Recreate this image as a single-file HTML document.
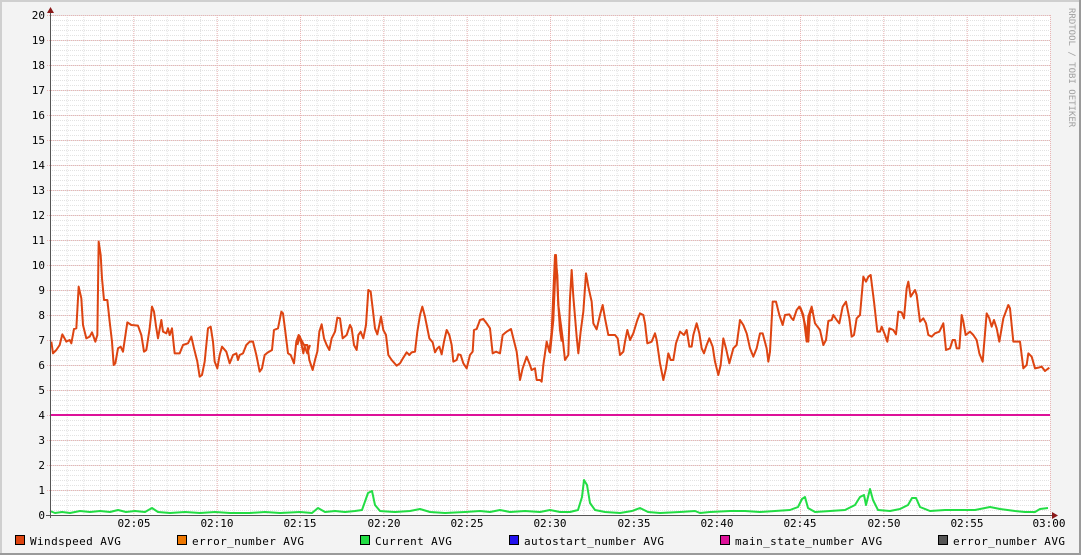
<!DOCTYPE html>
<html><head><meta charset="utf-8"><style>
html,body{margin:0;padding:0;background:#f3f3f3;}
svg{display:block;}
text{font-family:"DejaVu Sans Mono","Liberation Mono",monospace;}
</style></head><body>
<svg width="1081" height="555" viewBox="0 0 1081 555" xmlns="http://www.w3.org/2000/svg">
<defs>
<pattern id="mh" width="1000" height="5" patternUnits="userSpaceOnUse" x="50" y="15"><line x1="0" y1="0.5" x2="1000" y2="0.5" stroke="#e2e2e2" stroke-dasharray="1,1"/></pattern>
<pattern id="mv" width="16.667" height="500" patternUnits="userSpaceOnUse" x="50" y="15"><line x1="0.5" y1="0" x2="0.5" y2="500" stroke="#e2e2e2" stroke-dasharray="1,1"/></pattern>
</defs>
<rect x="0" y="0" width="1081" height="555" fill="#f3f3f3"/>
<rect x="0" y="0" width="1081" height="2" fill="#cfcfcf"/>
<rect x="0" y="0" width="2" height="555" fill="#cfcfcf"/>
<rect x="0" y="553" width="1081" height="2" fill="#9a9a9a"/>
<rect x="1079" y="0" width="2" height="555" fill="#9a9a9a"/>
<rect x="50" y="15" width="1000" height="500" fill="#fff"/>
<rect x="50" y="15" width="1000" height="500" fill="url(#mh)"/>
<rect x="50" y="15" width="1000" height="500" fill="url(#mv)"/>
<g stroke="#eab4b4" stroke-dasharray="1,1">
<line x1="47" y1="15.5" x2="1050" y2="15.5"/><line x1="47" y1="40.5" x2="1050" y2="40.5"/><line x1="47" y1="65.5" x2="1050" y2="65.5"/><line x1="47" y1="90.5" x2="1050" y2="90.5"/><line x1="47" y1="115.5" x2="1050" y2="115.5"/><line x1="47" y1="140.5" x2="1050" y2="140.5"/><line x1="47" y1="165.5" x2="1050" y2="165.5"/><line x1="47" y1="190.5" x2="1050" y2="190.5"/><line x1="47" y1="215.5" x2="1050" y2="215.5"/><line x1="47" y1="240.5" x2="1050" y2="240.5"/><line x1="47" y1="265.5" x2="1050" y2="265.5"/><line x1="47" y1="290.5" x2="1050" y2="290.5"/><line x1="47" y1="315.5" x2="1050" y2="315.5"/><line x1="47" y1="340.5" x2="1050" y2="340.5"/><line x1="47" y1="365.5" x2="1050" y2="365.5"/><line x1="47" y1="390.5" x2="1050" y2="390.5"/><line x1="47" y1="415.5" x2="1050" y2="415.5"/><line x1="47" y1="440.5" x2="1050" y2="440.5"/><line x1="47" y1="465.5" x2="1050" y2="465.5"/><line x1="47" y1="490.5" x2="1050" y2="490.5"/>
<line x1="133.8" y1="15" x2="133.8" y2="518"/><line x1="217.2" y1="15" x2="217.2" y2="518"/><line x1="300.5" y1="15" x2="300.5" y2="518"/><line x1="383.8" y1="15" x2="383.8" y2="518"/><line x1="467.2" y1="15" x2="467.2" y2="518"/><line x1="550.5" y1="15" x2="550.5" y2="518"/><line x1="633.8" y1="15" x2="633.8" y2="518"/><line x1="717.2" y1="15" x2="717.2" y2="518"/><line x1="800.5" y1="15" x2="800.5" y2="518"/><line x1="883.8" y1="15" x2="883.8" y2="518"/><line x1="967.2" y1="15" x2="967.2" y2="518"/><line x1="1050.5" y1="15" x2="1050.5" y2="518"/>
</g>
<g font-size="11" fill="#000" text-anchor="end">
<text x="45" y="19">20</text><text x="45" y="44">19</text><text x="45" y="69">18</text><text x="45" y="94">17</text><text x="45" y="119">16</text><text x="45" y="144">15</text><text x="45" y="169">14</text><text x="45" y="194">13</text><text x="45" y="219">12</text><text x="45" y="244">11</text><text x="45" y="269">10</text><text x="45" y="294">9</text><text x="45" y="319">8</text><text x="45" y="344">7</text><text x="45" y="369">6</text><text x="45" y="394">5</text><text x="45" y="419">4</text><text x="45" y="444">3</text><text x="45" y="469">2</text><text x="45" y="494">1</text><text x="45" y="519">0</text>
</g>
<g font-size="11" fill="#000" text-anchor="middle">
<text x="134" y="527">02:05</text><text x="217" y="527">02:10</text><text x="300" y="527">02:15</text><text x="384" y="527">02:20</text><text x="467" y="527">02:25</text><text x="550" y="527">02:30</text><text x="634" y="527">02:35</text><text x="717" y="527">02:40</text><text x="800" y="527">02:45</text><text x="884" y="527">02:50</text><text x="967" y="527">02:55</text><text x="1049" y="527">03:00</text>
</g>
<line x1="50" y1="415" x2="1050" y2="415" stroke="#dd1199" stroke-width="2"/>
<polyline fill="none" stroke="#22dd44" stroke-width="2" stroke-linejoin="round" points="50,511 55,513 62,512 70,513 80,511 90,512 100,511 110,512 118,510 126,512 135,511 145,512 152,508 158,512 170,513 185,512 200,513 215,512 230,513 250,513 265,512 280,513 300,512 312,513 318,508 325,512 335,511 345,512 355,511 362,510 368,493 372,491 375,505 380,511 395,512 410,511 420,509 430,512 445,513 465,512 480,511 490,512 500,510 510,512 525,511 540,512 550,510 560,512 570,512 578,510 582,497 584,480 587,485 590,503 595,510 605,512 620,513 632,511 640,508 648,512 660,513 680,512 695,511 700,513 710,512 730,511 745,511 760,512 775,511 790,510 798,507 802,499 805,497 808,508 815,512 830,511 845,510 855,505 860,497 864,495 866,505 870,489 873,500 878,510 890,511 900,509 908,505 912,498 916,498 920,507 930,511 945,510 960,510 975,510 985,508 990,507 1000,509 1015,511 1025,512 1035,512 1040,509 1048,508"/>
<g fill="none" stroke="#dd4411" stroke-width="6" stroke-linejoin="round">
<polyline transform="translate(48,235) scale(0.33333)" points="10,320 15,355 25,345 35,330 43,298 55,320 65,315 70,325 78,282 85,280 92,155 100,190 105,270 115,310 125,305 132,292 142,320 148,300 152,20 158,60 162,130 168,195 178,195 185,260 192,320 197,390 202,385 210,340 218,335 225,350 238,262 250,270 270,272 280,300 288,350 295,345 305,280 312,215 318,230 325,280 330,310 340,255 345,290 355,295 360,280 365,300 372,280 380,355 395,355 405,330 420,325 430,305 438,340 448,380 455,425 462,420 470,380 480,280 488,275 495,320 500,380 508,400 515,360 522,335 535,350 545,385 555,360 565,355 570,375 575,360 585,355 595,330 605,320 615,320 625,360 635,410 642,400 650,360 660,352 672,345 678,285 690,280 700,230 705,235 712,290 720,355 728,360 738,385 745,320 752,300 760,315 768,330 778,355 786,330"/>
<polyline transform="translate(300,235) scale(0.33333)" points="-8,330 0,305 10,355 15,330 22,330 28,375 38,405 45,375 52,350 58,290 65,268 72,310 80,330 88,345 95,310 105,290 112,248 120,250 128,310 140,300 150,270 155,280 162,330 170,345 175,300 182,290 190,310 198,270 205,165 212,170 218,220 225,280 232,298 238,270 243,245 250,285 258,300 265,360 275,375 290,392 300,385 310,368 320,352 328,360 335,352 345,350 352,290 360,240 367,215 375,245 380,270 388,310 398,322 405,352 412,340 418,335 425,358 432,320 440,285 448,300 455,330 460,380 470,375 475,358 482,360 490,385 500,400 510,360 518,350 522,285 530,282 540,255 550,252 560,265 570,280 578,355 588,350 600,355 608,300 620,290 633,282 640,310 650,350 660,435 668,400 680,365 688,385 695,405 705,400 710,435 720,435 725,440 730,390 740,320 748,350 755,290 765,60 772,120 775,210 780,285 785,320"/>
<polyline transform="translate(550,235) scale(0.33333)" points="0,355 10,255 18,60 25,210 38,310 45,375 55,360 60,190 65,105 70,185 80,305 85,355 92,290 100,230 108,115 115,155 125,200 130,265 140,283 150,240 158,210 165,250 175,300 195,300 203,310 210,360 220,350 225,320 232,285 240,315 250,295 262,255 270,235 280,240 285,265 292,325 305,320 315,295 320,315 330,385 340,435 348,400 355,355 362,375 370,375 378,325 390,290 402,300 410,285 418,335 425,335 430,300 440,265 448,295 455,340 462,355 470,330 478,310 488,335 495,380 505,420 512,390 520,310 528,340 538,385 550,340 560,330 570,255 580,270 590,295 600,340 610,365 620,340 630,295 638,295 650,340 655,380 660,350 668,200 678,200 688,240 698,270 705,240 718,238 725,250 730,255 740,225 748,215 755,230 762,255 770,290 775,320 780,235 790,225"/>
<polyline transform="translate(800,235) scale(0.33333)" points="0,215 10,240 20,320 25,245 35,215 45,265 60,285 70,330 78,315 85,258 95,255 100,240 110,255 118,265 128,215 138,200 148,250 155,305 162,300 170,250 180,240 190,125 198,140 205,125 212,120 222,200 232,290 240,290 245,275 255,300 262,320 268,280 280,285 288,298 295,230 305,232 312,250 320,160 325,140 332,185 345,165 350,180 360,260 370,250 378,265 385,300 395,305 405,295 418,290 430,265 438,345 450,340 458,315 465,315 470,340 478,340 485,240 490,260 497,300 510,290 520,300 530,315 538,355 548,380 560,235 568,250 575,275 582,255 590,280 598,320 610,250 625,210 630,220 640,320 660,320 670,400 680,390 685,355 695,365 705,400 715,398 725,395 735,408 748,398"/>
</g>
<line x1="50.5" y1="10" x2="50.5" y2="518" stroke="#555" stroke-width="1"/>
<line x1="46" y1="515.5" x2="1055" y2="515.5" stroke="#555" stroke-width="1"/>
<polygon points="47,13 54,13 50.5,7" fill="#8b1a1a"/>
<polygon points="1052,512 1052,519 1058,515.5" fill="#8b1a1a"/>
<text x="1069" y="8" font-size="9" fill="#a0a0a0" transform="rotate(90 1069 8)">RRDTOOL / TOBI OETIKER</text>
<g font-size="11" fill="#000" letter-spacing="0.4">
<rect x="15.5" y="535.5" width="9" height="9" fill="#dd4411" stroke="#000"/><text x="30" y="545">Windspeed AVG</text>
<rect x="177.5" y="535.5" width="9" height="9" fill="#ee7700" stroke="#000"/><text x="192" y="545">error_number AVG</text>
<rect x="360.5" y="535.5" width="9" height="9" fill="#22dd44" stroke="#000"/><text x="375" y="545">Current AVG</text>
<rect x="509.5" y="535.5" width="9" height="9" fill="#2211ee" stroke="#000"/><text x="524" y="545">autostart_number AVG</text>
<rect x="720.5" y="535.5" width="9" height="9" fill="#dd1199" stroke="#000"/><text x="735" y="545">main_state_number AVG</text>
<rect x="938.5" y="535.5" width="9" height="9" fill="#555" stroke="#000"/><text x="953" y="545">error_number AVG</text>
</g>
</svg>
</body></html>
